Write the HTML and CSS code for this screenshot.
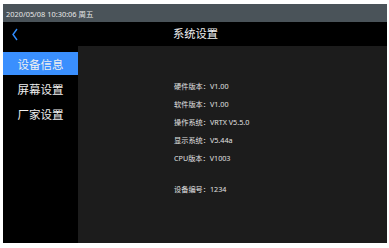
FILE: index.html
```html
<!DOCTYPE html>
<html lang="zh-CN">
<head>
<meta charset="utf-8">
<title>系统设置</title>
<link rel="stylesheet" href="styles.css">
</head>
<body>
<div class="screen">
  <div class="status">2020/05/08 10:30:06 周五</div>
  <div class="header">
    <div class="back">
      <svg width="6" height="13" viewBox="0 0 6 13"><polyline points="5,1 1,6.5 5,12" fill="none" stroke="#2f8cff" stroke-width="1.4" stroke-linejoin="miter"/></svg>
    </div>
    <div class="title">系统设置</div>
    <div></div>
  </div>
  <div class="main">
    <div class="sidebar">
      <div class="item active">设备信息</div>
      <div class="item">屏幕设置</div>
      <div class="item">厂家设置</div>
    </div>
    <div class="content">
      <div class="line">硬件版本：V1.00</div>
      <div class="line">软件版本：V1.00</div>
      <div class="line">操作系统：VRTX V5.5.0</div>
      <div class="line">显示系统：V5.44a</div>
      <div class="line">CPU版本：V1003</div>
      <div class="line gap">设备编号：1234</div>
    </div>
  </div>
</div>
</body>
</html>
```
FILE: styles.css
```css
html, body {
  margin: 0;
  padding: 0;
  background: #ffffff;
}
body {
  font-family: "Noto Sans", "Noto Sans CJK SC", sans-serif;
}
.screen {
  margin: 4px 2px 5px 3px;
  height: 239px;
  display: flex;
  flex-direction: column;
  background: #000;
}
.status {
  height: 18px;
  box-sizing: border-box;
  padding: 5px 0 0 3px;
  background: #4a5359;
  color: #e8e8e8;
  font-size: 7.4px;
  line-height: 11px;
  white-space: nowrap;
}
.header {
  height: 24px;
  display: grid;
  grid-template-columns: 1fr auto 1fr;
  align-items: center;
  background: #000;
}
.back {
  padding-left: 9px;
  display: flex;
  align-items: center;
}
.back svg {
  display: block;
}
.title {
  color: #f0f0f0;
  font-size: 11.3px;
  line-height: 24px;
  padding-left: 1px;
}
.main {
  flex: 1;
  display: flex;
}
.sidebar {
  width: 75px;
  background: #000;
  padding-top: 6px;
  box-sizing: border-box;
}
.item {
  height: 23px;
  margin-bottom: 2px;
  color: #f0f0f0;
  font-size: 11.5px;
  line-height: 25px;
  text-align: center;
}
.item.active {
  background: #3a8ffe;
}
.content {
  flex: 1;
  background: #1c1c1c;
  padding: 31px 0 0 96px;
  box-sizing: border-box;
}
.line {
  color: #e2e2e2;
  font-size: 7.2px;
  line-height: 18px;
  height: 18px;
  white-space: nowrap;
}
.line.gap {
  margin-top: 13px;
}
```
